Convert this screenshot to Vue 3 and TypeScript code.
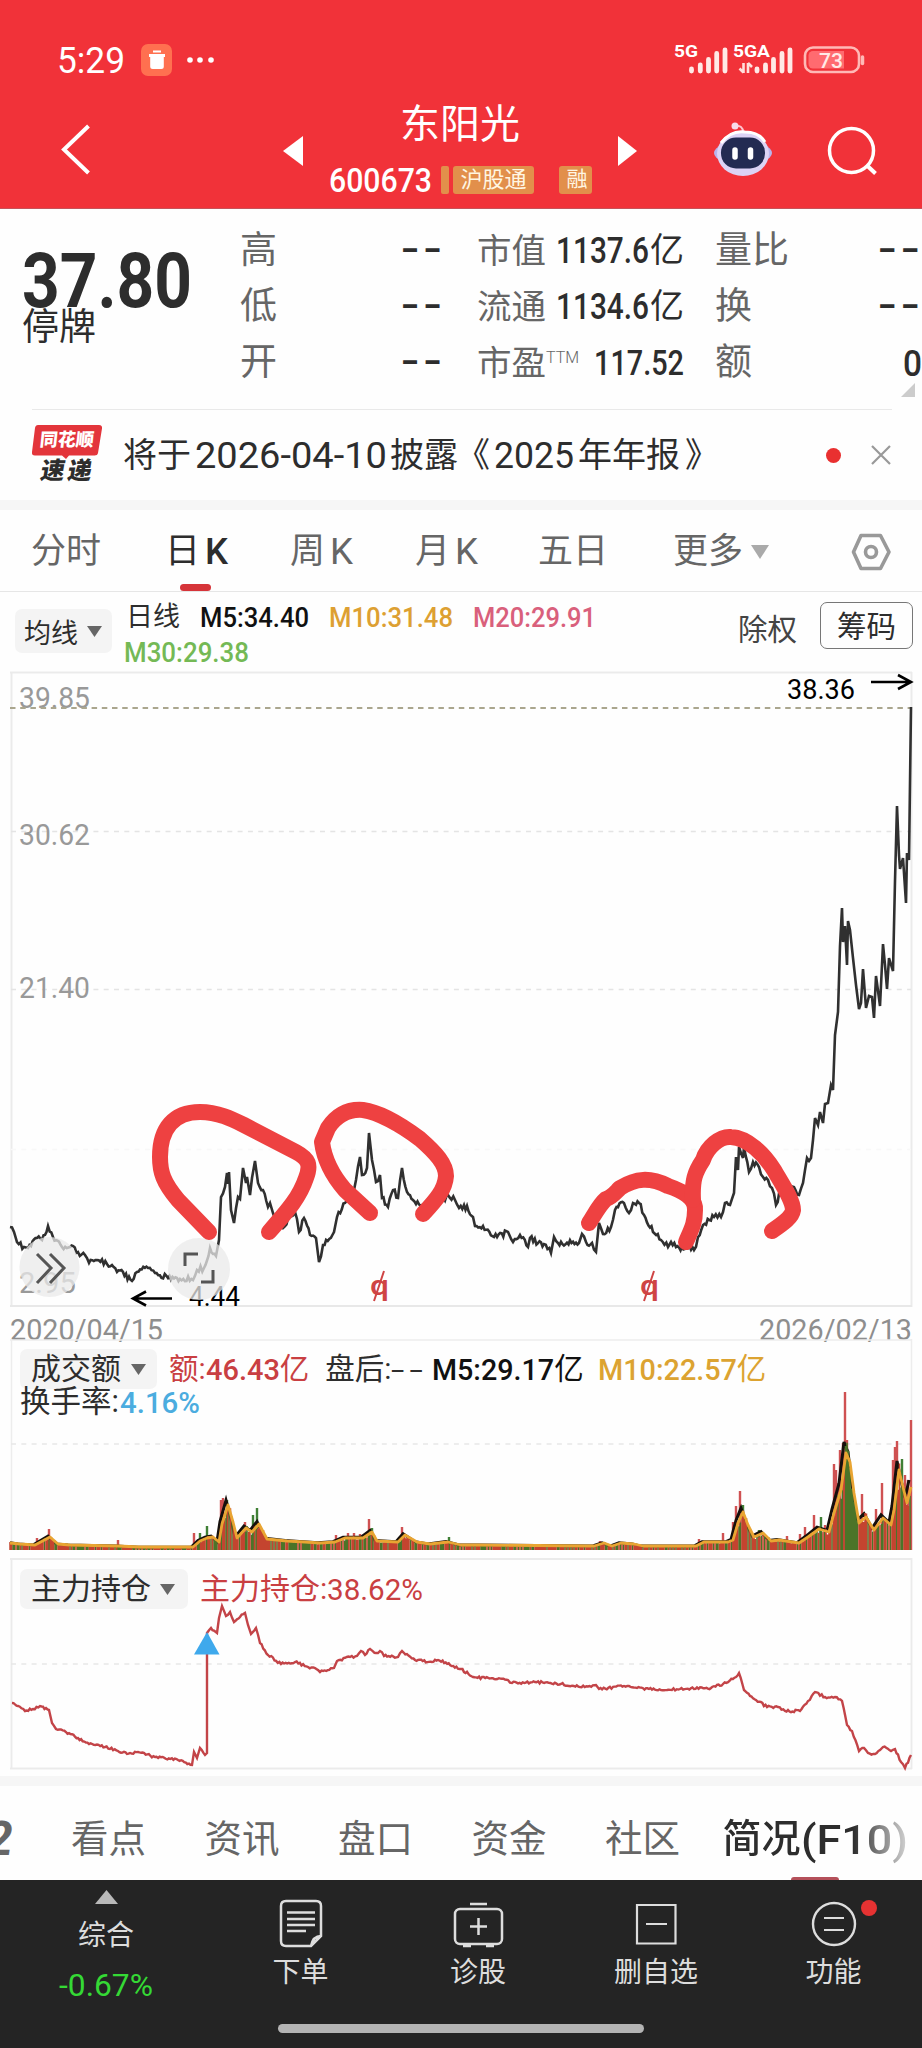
<script setup lang="ts">
import { h, type FunctionalComponent } from 'vue'

interface FitProps { w: number; size: number; text: string }

// Single line of text set to an exact advance width.
const FitText: FunctionalComponent<FitProps> = (p) => {
  const height = Math.round(p.size * 1.2)
  return h('svg', { width: p.w, height, viewBox: `0 0 ${p.w} ${height}`, class: 'fit' }, [
    h('text', {
      x: 0,
      y: height / 2 + p.size * 0.355,
      'font-size': p.size,
      textLength: p.w,
      lengthAdjust: 'spacingAndGlyphs',
      fill: 'currentColor',
    }, p.text),
  ])
}
FitText.props = ['w', 'size', 'text']

type Pt = [number, number]

const price: Pt[] = [
  [10, 1227], [14, 1232], [17, 1242], [24, 1247], [28, 1248], [37, 1238], [42, 1240], [48, 1226], [53, 1237], [62, 1247], [70, 1247], [78, 1252],
  [85, 1255], [89, 1263], [97, 1260], [107, 1264], [117, 1272], [123, 1272], [132, 1281], [137, 1272], [148, 1268], [155, 1273], [168, 1278],
  [180, 1279], [193, 1280], [197, 1270], [204, 1268], [210, 1248], [216, 1256], [219, 1240], [221, 1197], [225, 1187], [227, 1173], [228, 1184], [229, 1172], [231, 1210],
  [234, 1223], [238, 1197], [240, 1199], [243, 1168], [246, 1183], [247, 1177], [250, 1195], [252, 1178], [255, 1161], [258, 1183], [263, 1190], [268, 1207], [270, 1203], [273, 1213], [283, 1228],
  [290, 1215], [295, 1212], [299, 1232], [304, 1218], [310, 1235], [316, 1238], [319, 1262], [323, 1245], [334, 1232], [337, 1217], [345, 1203],
  [353, 1195], [356, 1180], [360, 1157], [362, 1175], [367, 1168], [369, 1133], [372, 1160], [376, 1182], [380, 1175], [382, 1198], [388, 1207],
  [393, 1190], [398, 1198], [402, 1168], [407, 1192], [413, 1200], [422, 1205], [433, 1207], [448, 1195], [455, 1200], [459, 1208], [464, 1205],
  [473, 1217], [475, 1226], [483, 1226], [494, 1237], [508, 1232], [513, 1242], [520, 1235], [528, 1247], [530, 1238], [538, 1243], [544, 1244],
  [551, 1253], [554, 1237], [558, 1243], [579, 1243], [582, 1234], [586, 1242], [592, 1243], [596, 1252], [599, 1223], [603, 1234], [611, 1227],
  [615, 1210], [624, 1203], [629, 1213], [633, 1203], [639, 1203], [644, 1215], [653, 1232], [661, 1240], [668, 1247], [671, 1242], [676, 1247],
  [694, 1250], [698, 1237], [703, 1225], [714, 1217], [721, 1217], [725, 1203], [730, 1205], [734, 1193], [736, 1157], [738, 1170], [739, 1147],
  [743, 1158], [744, 1147], [749, 1172], [753, 1162], [759, 1167], [763, 1177], [768, 1180], [772, 1188], [776, 1205], [781, 1190], [794, 1187], [799, 1195],
  [803, 1183], [807, 1158], [811, 1158], [813, 1140], [815, 1118], [818, 1125], [820, 1112], [823, 1123], [825, 1104], [828, 1103], [831, 1085], [833, 1090], [835, 1035],
  [838, 1012], [840, 946], [842, 908], [843, 942], [845, 926], [847, 965], [848, 921], [850, 930], [853, 958], [856, 985], [859, 1009], [861, 1003],
  [863, 969], [866, 1008], [869, 996], [872, 997], [874, 1018], [876, 976], [880, 1006], [883, 944], [887, 989], [889, 958], [893, 971], [895, 881],
  [897, 806], [899, 855], [900, 869], [903, 858], [906, 903], [907, 853], [909, 860], [911, 707],
]

const turnover: Pt[] = [
  [10, 1543], [20, 1544], [35, 1545], [50, 1537], [58, 1544], [70, 1545], [118, 1546], [140, 1547], [193, 1547], [200, 1541], [207, 1538], [213, 1537],
  [219, 1542], [222, 1524], [228, 1505], [233, 1522], [237, 1538], [246, 1528], [252, 1532], [259, 1524], [267, 1539], [287, 1541], [305, 1542],
  [320, 1543], [335, 1542], [345, 1538], [363, 1538], [372, 1532], [377, 1541], [398, 1542], [405, 1535], [417, 1542], [430, 1544], [448, 1542],
  [461, 1545], [478, 1545], [594, 1546], [604, 1543], [612, 1546], [621, 1543], [634, 1544], [643, 1546], [696, 1546], [704, 1542], [728, 1542],
  [733, 1540], [738, 1523], [743, 1512], [748, 1525], [754, 1537], [763, 1533], [771, 1541], [779, 1540], [799, 1543], [808, 1537], [819, 1529],
  [829, 1532], [834, 1513], [841, 1490], [846, 1453], [850, 1462], [854, 1493], [859, 1523], [866, 1517], [874, 1530], [883, 1518], [891, 1525],
  [894, 1510], [899, 1470], [903, 1487], [907, 1503], [911, 1487],
]

const spikes: [number, number, string][] = [
  [37, 1538, 'r'], [49, 1529, 'r'], [118, 1540, 'r'], [194, 1533, 'r'], [200, 1533, 'g'], [207, 1526, 'g'], [221, 1500, 'r'], [223, 1498, 'r'],
  [227, 1500, 'g'], [245, 1522, 'r'], [253, 1515, 'g'], [257, 1508, 'g'], [336, 1535, 'r'], [348, 1533, 'r'], [354, 1533, 'r'], [360, 1534, 'r'],
  [369, 1519, 'r'], [372, 1528, 'g'], [402, 1527, 'r'], [449, 1537, 'g'], [600, 1541, 'r'], [699, 1539, 'r'], [723, 1533, 'r'], [733, 1522, 'r'],
  [736, 1506, 'r'], [740, 1491, 'r'], [743, 1505, 'g'], [759, 1530, 'g'], [787, 1536, 'r'], [800, 1534, 'r'], [805, 1527, 'r'], [814, 1515, 'r'],
  [821, 1517, 'g'], [825, 1525, 'r'], [834, 1464, 'r'], [836, 1470, 'r'], [838, 1483, 'r'], [840, 1450, 'r'], [843, 1443, 'r'], [845, 1392, 'r'], [847, 1440, 'r'],
  [862, 1494, 'r'], [876, 1509, 'r'], [882, 1483, 'r'], [893, 1460, 'r'], [895, 1447, 'r'], [897, 1441, 'r'], [902, 1459, 'g'], [905, 1475, 'r'],
  [908, 1480, 'r'], [911, 1420, 'r'],
]

const holding: Pt[] = [
  [12, 1703], [18, 1706], [25, 1711], [33, 1709], [40, 1706], [49, 1710], [52, 1723], [56, 1729], [66, 1732], [78, 1738], [89, 1744], [105, 1747], [118, 1751],
  [127, 1754], [138, 1752], [155, 1757], [178, 1760], [192, 1765], [194, 1752], [197, 1758], [200, 1748], [205, 1755], [207, 1753], [207, 1633],
  [211, 1628], [217, 1633], [219, 1618], [222, 1606], [226, 1616], [230, 1612], [234, 1622], [240, 1617], [245, 1613], [248, 1625], [251, 1634],
  [256, 1628], [260, 1643], [268, 1655], [281, 1664], [295, 1662], [308, 1667], [315, 1668], [320, 1672], [334, 1668], [337, 1661], [350, 1657],
  [357, 1656], [361, 1651], [365, 1655], [370, 1649], [376, 1653], [380, 1651], [384, 1656], [398, 1657], [402, 1651], [415, 1660], [432, 1662],
  [438, 1660], [461, 1669], [473, 1677], [508, 1680], [512, 1683], [535, 1682], [561, 1684], [580, 1687], [596, 1685], [599, 1689], [624, 1686],
  [637, 1688], [667, 1690], [680, 1689], [711, 1688], [723, 1684], [733, 1679], [739, 1673], [744, 1690], [750, 1696], [767, 1707], [778, 1707],
  [785, 1711], [800, 1711], [808, 1701], [815, 1692], [825, 1697], [835, 1697], [842, 1701], [847, 1725], [852, 1731], [859, 1751], [864, 1748],
  [868, 1753], [875, 1754], [880, 1750], [883, 1747], [891, 1751], [895, 1749], [901, 1762], [905, 1768], [911, 1755],
]

const noise = (n: number): number => {
  const v = Math.sin(n * 12.9898) * 43758.5453
  return v - Math.floor(v)
}

// Joins the points, adding small daily wobble on the longer segments.
const wiggle = (pts: Pt[], amp: number): string => {
  const out: string[] = []
  pts.forEach(([x, y], i) => {
    const prev = pts[i - 1]
    if (prev && x - prev[0] > 3) {
      const n = Math.floor((x - prev[0]) / 1.5)
      for (let k = 1; k < n; k++) {
        const px = prev[0] + ((x - prev[0]) * k) / n
        const py = prev[1] + ((y - prev[1]) * k) / n + (noise(px) - 0.5) * amp
        out.push(`${px.toFixed(1)} ${py.toFixed(1)}`)
      }
    }
    out.push(`${x} ${y}`)
  })
  return 'M' + out.join('L')
}

const valueAt = (x: number): number => {
  const i = turnover.findIndex((p) => p[0] >= x)
  if (i <= 0) return turnover[0][1]
  const [x0, y0] = turnover[i - 1]
  const [x1, y1] = turnover[i]
  return y0 + ((y1 - y0) * (x - x0)) / (x1 - x0)
}

const BASE = 1550
const bars = { r: '', g: '' }
for (let x = 10; x < 911; x += 1.5) {
  const height = (BASE - valueAt(x)) * (0.8 + noise(x) * 0.35)
  const green = noise(x * 1.7) > 0.6 || (x > 847 && x < 857) || (x > 900 && x < 903)
  bars[green ? 'g' : 'r'] += `M${x} ${BASE}V${(BASE - height).toFixed(1)}`
}
const spikePath = (c: string) => spikes.filter((s) => s[2] === c).map((s) => `M${s[0]} ${BASE}V${s[1]}`).join('')

const pricePath = wiggle(price, 6.5)
const holdPath = wiggle(holding, 2.5)
const ma10 = 'M' + turnover.map((p) => p.join(' ')).join('L')
const ma5 = 'M' + turnover.map(([x, y]) => `${Math.max(10, x - 2)} ${BASE - 5 - (BASE - 5 - y) * 1.12}`).join('L')

const axis = [
  { v: '39.85', y: 706 - 672 }, { v: '30.62', y: 843 - 672 }, { v: '21.40', y: 996 - 672 }, { v: '2.95', y: 1291 - 672 },
]
</script>

<template>
  <main class="app">
    <section class="top">
      <div class="status">
        <FitText class="time" :w="68" :size="36" text="5:29" />
        <svg class="bin" width="32" height="32" viewBox="0 0 32 32">
          <rect width="31" height="32" rx="7" fill="#ff7050" />
          <path d="M8 10h16v3h-1.200v9.500a2.500 2.500 0 0 1-2.500 2.500h-8.600a2.500 2.500 0 0 1-2.500-2.500V13H8zM12 6.500h8v2h-8z" fill="#fff" />
        </svg>
        <svg class="dots" width="30" height="8" viewBox="0 0 30 8"><circle cx="4" cy="4" r="2.800" /><circle cx="14" cy="4" r="2.800" /><circle cx="25" cy="4" r="2.800" /></svg>
        <svg class="signals" width="194" height="34" viewBox="672 42 194 34">
          <g font-size="17" font-weight="700" fill="#fff">
            <text x="674" y="56" textLength="24" lengthAdjust="spacingAndGlyphs">5G</text>
            <text x="733" y="56" textLength="37" lengthAdjust="spacingAndGlyphs">5GA</text>
          </g>
          <path d="M691.500 71V69M700.300 71V65M708.500 71V59.500M716.700 71V53.500M725 71V50M757 71V69M765.500 71V65M773.500 71V59.500M782 71V53.500M790 71V50" stroke="#ffe9e6" stroke-width="4.800" stroke-linecap="round" transform="translate(0 -1)" />
          <path d="M743.500 62V72M739.500 67.500l4 4M748 72V62M748 62l4 4" stroke="#ffe0dc" stroke-width="2.600" fill="none" />
          <rect x="805" y="46.500" width="54" height="24.500" rx="8" fill="none" stroke="#ffb9b6" stroke-width="2.600" />
          <path d="M813 50h31v17.500h-31a4.500 4.500 0 0 1-4.500-4.500v-8.500a4.500 4.500 0 0 1 4.500-4.500z" fill="#ff6b70" />
          <path d="M862.500 56v6.500" stroke="#ffb9b6" stroke-width="3.500" stroke-linecap="round" />
          <text x="819" y="66.500" font-size="21" font-weight="500" fill="#ffe9e6" textLength="24" lengthAdjust="spacingAndGlyphs">73</text>
        </svg>
      </div>
      <div class="nav">
        <svg class="back" width="32" height="52" viewBox="60 124 32 52"><path d="M88.500 126L64 149.500L88.500 173" fill="none" stroke="#fff" stroke-width="4" /></svg>
        <svg class="prev" width="20" height="30" viewBox="0 0 20 30"><path d="M0 15L20 0V30z" fill="#fff" /></svg>
        <div class="stock">
          <h1>东阳光</h1>
          <div class="code">
            <FitText class="m" :w="103" :size="33" text="600673" />
            <i class="bar" />
            <span class="tag">沪股通</span>
            <span class="tag one">融</span>
          </div>
        </div>
        <svg class="next" width="19" height="30" viewBox="0 0 19 30"><path d="M19 15L0 0V30z" fill="#fff" /></svg>
        <svg class="robot" width="62" height="58" viewBox="712 120 62 58">
          <path d="M735 126q8-1 8 6" fill="none" stroke="#ffc4cf" stroke-width="2" />
          <circle cx="735" cy="126" r="3.500" fill="#f7dcea" />
          <ellipse cx="743" cy="153" rx="29" ry="12" fill="#b9b4ec" />
          <ellipse cx="743" cy="153.500" rx="26" ry="22.500" fill="#dcd3f5" />
          <path d="M721 143q10-13 24-11q14 0 20 10" fill="none" stroke="#fff" stroke-width="3" />
          <rect x="721" y="137.500" width="44" height="31" rx="15" fill="#232b52" />
          <path d="M735 150v7M750.500 150v7" stroke="#fff" stroke-width="5.500" stroke-linecap="round" />
        </svg>
        <svg class="search" width="50" height="52" viewBox="826 126 50 52"><circle cx="851.500" cy="150.500" r="22" fill="none" stroke="#fff" stroke-width="3.500" /><path d="M867 165.500l8.500 8" stroke="#fff" stroke-width="4" /></svg>
      </div>
    </section>

    <section class="quote">
      <div class="last">
        <FitText class="b" :w="170" :size="76" text="37.80" />
        <span>停牌</span>
      </div>
      <div class="col a">
        <p><span>高</span><FitText class="m dash" :w="45" :size="38" text="--" /></p>
        <p><span>低</span><FitText class="m dash" :w="45" :size="38" text="--" /></p>
        <p><span>开</span><FitText class="m dash" :w="45" :size="38" text="--" /></p>
      </div>
      <div class="col b2">
        <p><span>市值</span><em><FitText class="m" :w="93" :size="36" text="1137.6" />亿</em></p>
        <p><span>流通</span><em><FitText class="m" :w="93" :size="36" text="1134.6" />亿</em></p>
        <p><span>市盈<sup>TTM</sup></span><FitText class="m" :w="90" :size="35" text="117.52" /></p>
      </div>
      <div class="col c">
        <p><span>量比</span><FitText class="m dash" :w="46" :size="38" text="--" /></p>
        <p><span>换</span><FitText class="m dash" :w="46" :size="38" text="--" /></p>
        <p><span>额</span><FitText class="m zero" :w="19" :size="37" text="0" /></p>
        <svg class="corner" width="14" height="14"><path d="M14 0V14H0z" fill="#ccc" /></svg>
      </div>
    </section>

    <section class="notice">
      <div class="logo">
        <svg width="70" height="34" viewBox="0 0 70 34"><path d="M6 0H67q3.500 0 3 3.500L66 28q-.5 2.500-3.500 2.500H37L34 34l-4-3.500H3q-3.500 0-3-3.500L3 3q.5-3 3-3z" fill="#e3353b" /></svg>
        <b>同花顺</b>
        <strong>速递</strong>
      </div>
      <p class="msg">
        <span>将于</span><FitText class="n1" :w="192" :size="37" text="2026-04-10" /><span class="n2">披露</span><span class="n3">《</span><FitText class="n4" :w="80" :size="37" text="2025" /><span class="n5">年年报</span><span class="n6">》</span>
      </p>
      <i class="dot" />
      <svg class="close" width="20" height="20"><path d="M1 1L19 19M19 1L1 19" stroke="#999" stroke-width="2.200" /></svg>
    </section>

    <nav class="periods">
      <span>分时</span><span class="on">日<FitText class="m" :w="23" :size="36" text="K" /></span><span>周<FitText :w="23" :size="36" text="K" /></span><span>月<FitText :w="23" :size="36" text="K" /></span><span class="five">五日</span>
      <span class="more">更多<svg width="18" height="14"><path d="M0 0H18L9 14z" fill="#aaa" /></svg></span>
      <svg class="gear" width="40" height="38" viewBox="852 532 40 38"><path d="M862 534.500H881.500L890 551L881.500 567.500H862L854.500 551z" fill="none" stroke="#999" stroke-width="3.600" stroke-linejoin="round" /><circle cx="872" cy="551" r="5.500" fill="none" stroke="#999" stroke-width="3.600" /></svg>
    </nav>

    <section class="ma">
      <button>均线<svg width="15" height="11"><path d="M0 0H15L7.500 11z" fill="#666" /></svg></button>
      <div class="lines">
        <div><span>日线</span><FitText class="k" :w="109" :size="27" text="M5:34.40" /><FitText class="y" :w="124" :size="27" text="M10:31.48" /><FitText class="p" :w="123" :size="27" text="M20:29.91" /></div>
        <div><FitText class="g" :w="125" :size="27" text="M30:29.38" /></div>
      </div>
      <span class="exr">除权</span>
      <span class="chips">筹码</span>
    </section>

    <section class="chart">
      <svg width="922" height="635" viewBox="0 672 922 635">
        <path d="M10 672.500H912M11.500 672V1307M911.500 672V1307" stroke="#ebebeb" stroke-width="2" fill="none" />
        <path d="M10 1306H912" stroke="#e8e8e8" stroke-width="2" />
        <path d="M11 831.500H911M11 989.500H911" stroke="#e4e4e4" stroke-width="1.500" stroke-dasharray="5 5.300" />
        <path d="M11 1149.500H911" stroke="#f8f8f8" stroke-width="1.500" stroke-dasharray="5 5.300" />
        <g class="axis" transform="translate(0 672)">
          <text v-for="a in axis" :key="a.v" x="19" :y="a.y + 2" :textLength="a.v.length * 14.200" lengthAdjust="spacingAndGlyphs">{{ a.v }}</text>
        </g>
        <path d="M10 708H911" stroke="#aaa68e" stroke-width="2" stroke-dasharray="5.500 4.700" />
        <path :d="pricePath" fill="none" stroke="#303030" stroke-width="2.600" />
        <g class="mark">
          <text x="787" y="699" textLength="68" lengthAdjust="spacingAndGlyphs">38.36</text>
          <text x="189" y="1306" textLength="51" lengthAdjust="spacingAndGlyphs">4.44</text>
        </g>
        <path d="M871 682H911M898 675L911 682L898 689M172 1298.500H133M146 1291.500L133 1298.500L146 1305.500" fill="none" stroke="#000" stroke-width="2.600" />
        <g class="ex">
          <text x="370" y="1294.500" textLength="19" lengthAdjust="spacingAndGlyphs">q</text>
          <text x="640" y="1294.500" textLength="19" lengthAdjust="spacingAndGlyphs">q</text>
        </g>
        <path d="M384 1271L374 1301M654 1271L644 1301" stroke="#cf4444" stroke-width="2" />
        <circle cx="49.500" cy="1267" r="30" fill="#e9e9e9" fill-opacity=".75" />
        <circle cx="199" cy="1269" r="31" fill="#e9e9e9" fill-opacity=".75" />
        <path d="M37 1254L51 1268L37 1283M50 1254L64 1268L50 1283M185 1266V1254H198M213 1270V1282H201" fill="none" stroke="#555" stroke-width="3" />
        <g class="pen">
          <path d="M209 1232L178 1200C163 1182 160 1172 160 1157C160 1128 174 1112 200 1112C218 1112 232 1119 244 1125L296 1152C309 1159 311 1165 306 1178C300 1196 290 1208 269 1232" />
          <path d="M370 1213L345 1190C332 1175 324 1158 322 1142L328 1128C338 1113 350 1109 363 1110C378 1112 400 1124 420 1139C436 1153 446 1164 446 1176C445 1190 436 1200 423 1214" />
          <path d="M589 1223C596 1212 600 1204 606 1199C612 1197 614 1194 620 1188C636 1178 650 1177 668 1186C680 1190 696 1197 695 1210C695 1224 691 1230 686 1242" />
          <path d="M693 1200C692 1180 695 1172 703 1160C707 1147 720 1136 731 1137C748 1138 764 1154 774 1170C782 1184 793 1200 793 1210C792 1217 784 1223 772 1231" />
        </g>
      </svg>
    </section>
    <div class="dates"><FitText :w="153" :size="30" text="2020/04/15" /><FitText :w="153" :size="30" text="2026/02/13" /></div>

    <section class="panel vol">
      <svg class="plot" width="922" height="219" viewBox="0 1339 922 219">
        <path d="M10 1340H912M11.500 1339V1550M911.500 1339V1550" stroke="#ededed" stroke-width="1.500" />
        <path d="M11 1444H911" stroke="#e8e8e8" stroke-width="1.500" stroke-dasharray="5 5.300" />
        <path :d="spikePath('r')" stroke="#cf5152" stroke-width="2.400" />
        <path :d="spikePath('g')" stroke="#3f7f35" stroke-width="2.400" />
        <path :d="ma5" fill="none" stroke="#16100c" stroke-width="3" />
        <path :d="bars.g" stroke="#4b7428" stroke-width="1.600" />
        <path :d="bars.r" stroke="#c4442f" stroke-width="1.500" />
        <path :d="ma10" fill="none" stroke="#e9a532" stroke-width="2.800" stroke-linejoin="round" />
      </svg>
      <div class="legend">
        <button>成交额<svg width="15" height="11"><path d="M0 0H15L7.500 11z" fill="#666" /></svg></button>
        <span class="red first">额:</span><FitText class="red m" :w="74" :size="30" text="46.43" /><span class="red">亿</span>
        <span class="after">盘后:</span><FitText class="dashes" :w="37" :size="28" text="--" />
        <FitText class="black m m5" :w="122" :size="29" text="M5:29.17" /><span class="black">亿</span>
        <FitText class="gold m m10" :w="139" :size="29" text="M10:22.57" /><span class="gold">亿</span>
      </div>
      <div class="rate"><span>换手率:</span><FitText class="blue m" :w="80" :size="30" text="4.16%" /></div>
    </section>

    <section class="panel hold">
      <svg class="plot" width="922" height="218" viewBox="0 1558 922 218">
        <path d="M10 1559H912M11.500 1558V1769M911.500 1558V1769M10 1768.500H912" stroke="#ebebeb" stroke-width="1.800" />
        <path d="M11 1664H911" stroke="#e8e8e8" stroke-width="1.500" stroke-dasharray="5 5.300" />
        <path :d="holdPath" fill="none" stroke="#c34448" stroke-width="2.400" />
        <path d="M207 1632L219.500 1654.500H194z" fill="#3fa9ec" />
      </svg>
      <div class="legend">
        <button>主力持仓<svg width="15" height="11"><path d="M0 0H15L7.500 11z" fill="#666" /></svg></button>
        <span class="red first">主力持仓:</span><FitText class="red" :w="96" :size="30" text="38.62%" />
      </div>
    </section>

    <nav class="tabs">
      <span class="cut">2</span><span>看点</span><span>资讯</span><span>盘口</span><span>资金</span><span>社区</span>
      <span class="on">简况<FitText class="m" :w="107" :size="41" text="(F10)" /></span>
    </nav>

    <footer class="dock">
      <div class="index">
        <svg width="23" height="14"><path d="M11.500 0L23 14H0z" fill="#b8b8b8" /></svg>
        <span>综合</span>
        <FitText :w="94" :size="31" text="-0.67%" />
      </div>
      <div class="item">
        <svg width="50" height="50" viewBox="276 1898 50 50"><path d="M286 1901H316q5 0 5 5V1936L311 1946H286q-5 0-5-5V1906q0-5 5-5zM321 1936q-8 0-10 10" fill="none" stroke="#ddd" stroke-width="2.500" /><path d="M287 1912.500H315M287 1919H315M287 1925H315M287 1931H306" stroke="#ddd" stroke-width="2.500" /></svg>
        <span>下单</span>
      </div>
      <div class="item">
        <svg width="50" height="50" viewBox="452 1898 50 50"><rect x="454" y="1909" width="47" height="35" rx="5" fill="none" stroke="#ddd" stroke-width="2.500" /><path d="M469 1904H486M477.500 1918V1935M469 1926.500H486M462 1946H470M485 1946H493" stroke="#ddd" stroke-width="2.500" /></svg>
        <span>诊股</span>
      </div>
      <div class="item">
        <svg width="50" height="50" viewBox="630 1898 50 50"><path d="M636 1905H674.500V1943.500H636zM645 1924H666" fill="none" stroke="#ddd" stroke-width="2.200" /></svg>
        <span>删自选</span>
      </div>
      <div class="item">
        <svg width="50" height="50" viewBox="808 1898 50 50"><circle cx="833" cy="1924" r="21" fill="none" stroke="#ddd" stroke-width="2.400" /><path d="M823 1918H843M823 1930H843" stroke="#ddd" stroke-width="2.200" /></svg>
        <span>功能</span>
        <i class="badge" />
      </div>
      <i class="home" />
    </footer>
  </main>
</template>

<style>
body { background: #fff; }
</style>

<style scoped>
.app { width: 922px; height: 2048px; overflow: hidden; position: relative; background: #fefefe; color: #2d2d2d; font-family: Roboto, "Noto Sans CJK SC", sans-serif; }
.app * { box-sizing: border-box; }
svg { display: block; flex: none; overflow: visible; }
p, h1 { margin: 0; }
span, strong, b, em { white-space: nowrap; font-style: normal; }
button { border: 0; padding: 0; background: #f4f4f4; border-radius: 7px; color: #2d2d2d; font: inherit; display: flex; align-items: center; flex: none; }
.m { font-weight: 500; }
.b { font-weight: 700; }

.top { height: 209px; background: #f13239; color: #fff; border-bottom: 1px solid #c6535a; }
.status { height: 119px; display: flex; align-items: center; padding: 1px 56px 0 57px; }
.bin { margin-left: 16px; }
.dots { margin-left: 13px; fill: #fff; }
.signals { margin-left: auto; }
.nav { height: 89px; display: flex; padding-left: 60px; }
.back { margin-top: 5px; }
.prev { margin: 17px 27px 0 191px; }
.stock { width: 262px; display: flex; flex-direction: column; align-items: center; margin-top: -24px; }
.stock h1 { font-size: 40px; line-height: 58px; font-weight: 400; margin: 1px 0 0 -2px; }
.code { display: flex; align-items: center; height: 28px; margin-top: 12px; width: 262px; }
.code .fit { margin-left: -1px; }
.bar { width: 8px; height: 28px; background: #e28f4b; border-radius: 2px; margin-left: 9px; flex: none; }
.tag { width: 81px; height: 28px; line-height: 27px; margin-left: 4px; background: #e28f4b; border-radius: 3px; font-size: 22px; text-align: center; flex: none; color: #fff6e2; }
.tag.one { width: 33px; margin-left: 25px; padding-left: 3px; font-size: 21px; }
.next { margin: 17px 0 0 26px; }
.robot { margin: 1px 0 0 75px; }
.search { margin: 7px 0 0 52px; }

.quote { height: 200px; display: grid; grid-template-columns: 240px 204px 33px 207px 31px 207px; position: relative; }
.last { padding: 26px 0 0 22px; }
.last span { display: block; font-size: 37px; line-height: 46px; margin-top: -21px; }
.col { padding-top: 13px; }
.col.b2 { grid-column: 4; }
.col.c { grid-column: 6; position: relative; }
.col p { height: 56px; display: flex; align-items: center; justify-content: space-between; font-size: 37px; line-height: 56px; color: #666; }
.col p > span { position: relative; top: 1px; }
.col.b2 p { font-size: 34.500px; }
.col.b2 em { display: flex; align-items: center; font-size: 34px; width: 128px; justify-content: space-between; }
.col p svg, .col em { color: #2d2d2d; }
.col p svg { margin-top: 1px; }
.col p .dash { letter-spacing: 3px; margin: -2px -2px 0 0; }
.col sup { font-size: 16px; font-weight: 300; line-height: 0; vertical-align: 12px; }
.corner { position: absolute; left: 186px; top: 174px; }

.notice { height: 101px; margin: 0 30px 0 32px; border-top: 1px solid #e9e9e9; display: flex; align-items: center; padding-bottom: 10px; position: relative; }
.notice::after { content: ""; position: absolute; left: -32px; width: 922px; bottom: 0; height: 10px; background: #f6f6f6; }
.logo { width: 70px; height: 60px; position: relative; flex: none; margin-top: -1px; }
.logo b { position: absolute; left: 8px; top: 1px; font-size: 18px; line-height: 28px; color: #fff; transform: skewX(-6deg); font-weight: 900; }
.logo strong { position: absolute; left: 9px; top: 32px; font-size: 24px; line-height: 28px; transform: skewX(-10deg); font-weight: 900; letter-spacing: 3px; }
.msg { display: flex; align-items: center; margin-left: 21px; width: 582px; height: 56px; font-size: 34px; line-height: 54px; }
.n1 { margin-left: 4px; }
.n2 { margin-left: 3px; }
.n3 { margin-left: -2px; }
.n4 { margin-left: 4px; }
.n5 { margin-left: 4px; }
.n6 { margin-left: 5px; }
.dot { width: 15px; height: 15px; border-radius: 50%; background: #e93030; margin-left: 121px; flex: none; }
.close { margin-left: 30px; }

.periods { height: 82px; border-bottom: 1px solid #e6e6e6; display: flex; align-items: center; font-size: 35px; color: #666; padding: 2px 0 0 31px; }
.periods span { display: flex; align-items: center; height: 54px; line-height: 54px; position: relative; }
.periods span + span { margin-left: 62px; }
.periods span svg { margin-left: 5px; }
.periods span + .on { color: #2d2d2d; margin-left: 64px; }
.periods .on::after { content: ""; position: absolute; left: 15px; top: 59px; width: 31px; height: 7px; border-radius: 4px; background: #d63439; }
.periods span + .five { margin-left: 60px; }
.periods span + .more { margin-left: 65px; }
.periods .more svg { margin-left: 8px; }
.gear { margin-left: 82px; }

.ma { height: 80px; display: flex; align-items: flex-start; }
.ma button { width: 97px; height: 44px; margin: 17px 0 0 15px; font-size: 27px; padding-left: 9px; gap: 9px; }
.lines { width: 627px; padding: 7px 0 0 12px; }
.lines div { display: flex; align-items: center; height: 35px; font-weight: 500; }
.lines span { font-size: 27px; line-height: 36px; font-weight: 400; margin: 0 20px 0 2px; }
.lines .k { color: #111; }
.lines .y { color: #dda032; margin-left: 20px; }
.lines .p { color: #d9607c; margin-left: 20px; }
.lines .g { color: #74b955; }
.exr { width: 82px; margin: 17px 0 0 -1px; font-size: 29.500px; line-height: 42px; color: #444; }
.chips { width: 93px; height: 47px; margin-top: 10px; border: 1.500px solid #777; border-radius: 7px; text-align: center; font-size: 29.500px; line-height: 48px; margin-left: 0; }

.chart { height: 635px; }
.axis { font-size: 29px; fill: #999; font-weight: 400; }
.mark { font-size: 28px; fill: #000; }
.ex { font-size: 28px; font-weight: 500; fill: #cf4444; }
.pen { fill: none; stroke: #ee4141; stroke-width: 16px; stroke-linecap: round; stroke-linejoin: round; }
.dates { height: 32px; display: flex; justify-content: space-between; align-items: center; padding: 12px 10px 0 10px; color: #8e8e8e; }

.panel { position: relative; }
.vol { height: 219px; }
.hold { height: 218px; border: 0; }
.plot { position: absolute; left: 0; top: 0; }
.legend, .rate { position: relative; display: flex; align-items: center; font-size: 30px; line-height: 40px; }
.legend { padding: 10px 0 0 20px; }
.legend button { width: 137px; height: 40px; padding-left: 11px; gap: 10px; }
.vol .legend button { line-height: 40px; }
.hold .legend { padding-top: 11px; }
.hold .legend button { width: 168px; gap: 9px; }
.rate { padding-left: 20px; line-height: 28px; height: 28px; margin-top: -1px; }
.rate span { font-size: 30.500px; }
.rate svg { margin-left: 1px; }
.legend span { font-size: 30px; }
.vol .legend span { font-size: 29.500px; }
.legend .first { margin-left: 12px; }
.red { color: #c93f42; }
.black { color: #111; }
.gold { color: #dca331; }
.blue { color: #4bacdf; }
.after { margin-left: 16px; }
.dashes { letter-spacing: 3px; }
.m5 { margin-left: 4px; }
.m10 { margin-left: 14px; }

.tabs { height: 104px; border-top: 10px solid #f6f6f6; display: flex; align-items: center; font-size: 37.500px; color: #666; position: relative; padding-top: 12px; overflow: hidden; }
.tabs span { width: 133.500px; flex: none; line-height: 56px; }
.tabs .cut { width: 71px; font-weight: 700; font-style: italic; font-size: 48px; text-indent: -14px; }
.tabs .on { width: 199px; margin-left: -16px; color: #2d2d2d; font-weight: 500; font-size: 39px; display: flex; align-items: center; -webkit-mask-image: linear-gradient(90deg, #000 130px, rgba(0, 0, 0, .15) 188px); mask-image: linear-gradient(90deg, #000 130px, rgba(0, 0, 0, .15) 188px); }
.tabs::after { content: ""; position: absolute; left: 791px; bottom: 0; width: 48px; height: 3px; background: #b4505a; border-radius: 3px 3px 0 0; }

.dock { height: 168px; background: #242424; color: #ddd; position: relative; display: grid; grid-template-columns: 212px 177px 178px 178px 177px; font-size: 28px; line-height: 40px; }
.index { display: flex; flex-direction: column; align-items: center; padding-top: 10px; }
.index span { margin-top: 12px; }
.index .fit { margin-top: 10px; color: #35d935; }
.item { display: flex; flex-direction: column; align-items: center; padding-top: 18px; position: relative; }
.item span { margin-top: 5px; }
.badge { position: absolute; left: 116px; top: 20px; width: 16px; height: 16px; border-radius: 50%; background: #e63232; }
.home { position: absolute; left: 278px; top: 144px; width: 366px; height: 9px; border-radius: 5px; background: #b4b4b4; }
</style>
